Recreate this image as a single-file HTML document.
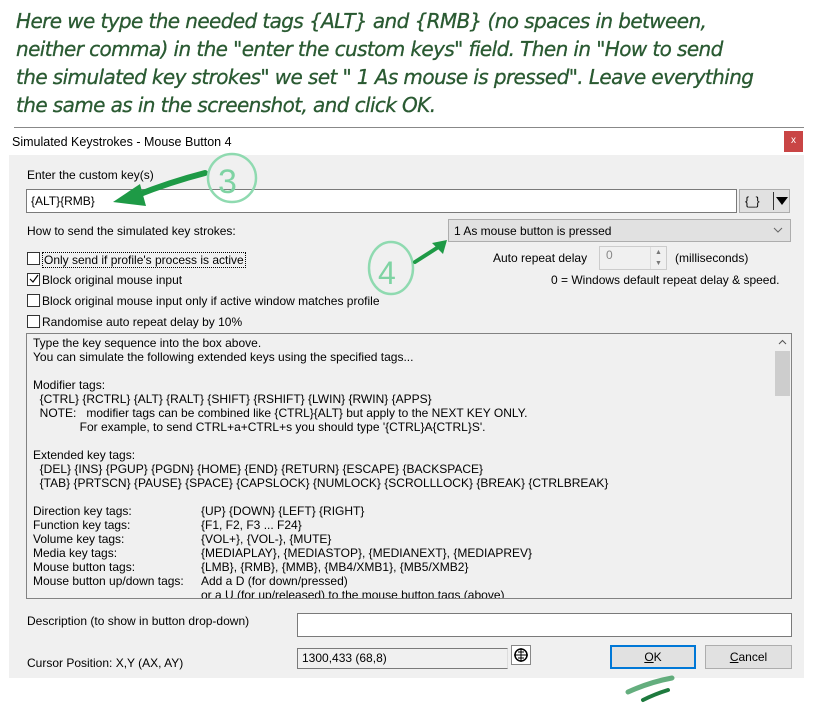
<!DOCTYPE html>
<html><head><meta charset="utf-8"><style>
*{margin:0;padding:0;box-sizing:border-box}
body{width:817px;height:711px;background:#fff;position:relative;overflow:hidden;font-family:"Liberation Sans",sans-serif;font-size:12px;color:#000}
.a{position:absolute;white-space:pre}
.hd{position:absolute;left:16px;font-size:20px;color:#2a5a32;font-family:"DejaVu Sans","Liberation Sans",sans-serif;font-style:italic;letter-spacing:-0.6px;white-space:pre;-webkit-text-stroke:0.3px #2a5a32}
.cb{position:absolute;width:13px;height:13px;border:1px solid #333;background:#fff}
.lbl{position:absolute;white-space:pre}
.ta div{height:14px;line-height:14px;white-space:pre}
</style></head><body>
<div class="hd" style="top:9px">Here we type the needed tags {ALT} and {RMB} (no spaces in between,</div>
<div class="hd" style="top:37px">neither comma) in the "enter the custom keys" field. Then in "How to send</div>
<div class="hd" style="top:65px">the simulated key strokes" we set " 1 As mouse is pressed". Leave everything</div>
<div class="hd" style="top:93px">the same as in the screenshot, and click OK.</div>
<div style="position:absolute;left:14px;top:127px;width:790px;height:1px;background:#888"></div>
<div style="position:absolute;left:9px;top:128px;width:795px;height:27px;background:#fff"></div>
<div class="a" style="left:12px;top:135px;font-size:12.5px">Simulated Keystrokes - Mouse Button 4</div>
<div style="position:absolute;left:784px;top:131px;width:19px;height:21px;background:#c94545;color:#fff;font-size:10px;text-align:center;line-height:20px">x</div>
<div style="position:absolute;left:9px;top:155px;width:795px;height:523px;background:#f0f0f0"></div>
<div class="a" style="left:27px;top:168px">Enter the custom key(s)</div>
<div style="position:absolute;left:26px;top:189px;width:711px;height:24px;background:#fff;border:1px solid #7a7a7a"></div>
<div class="a" style="left:31px;top:194px">{ALT}{RMB}</div>
<div style="position:absolute;left:739px;top:189px;width:51px;height:24px;background:#e1e1e1;border:1px solid #adadad"></div>
<div class="a" style="left:745px;top:194px">{_}</div>
<div style="position:absolute;left:773px;top:192px;width:1px;height:18px;background:#333"></div>
<div style="position:absolute;left:776px;top:197px;width:0;height:0;border-left:6px solid transparent;border-right:6px solid transparent;border-top:8px solid #000"></div>
<div class="a" style="left:27px;top:224px">How to send the simulated key strokes:</div>
<div style="position:absolute;left:448px;top:219px;width:343px;height:23px;background:#e1e1e1;border:1px solid #adadad"></div>
<div class="a" style="left:454px;top:224px">1 As mouse button is pressed</div>
<svg style="position:absolute;left:773px;top:227px" width="10" height="7"><path d="M1 1l4 4 4-4" stroke="#666" fill="none"/></svg>
<div class="cb" style="left:27px;top:252px"></div>
<div class="lbl" style="left:42px;top:252px;border:1px dotted #000;padding:0 1px">Only send if profile's process is active</div>
<div class="cb" style="left:27px;top:273px"></div>
<svg style="position:absolute;left:28px;top:274px" width="11" height="11"><path d="M2 5l3 3 5-7" stroke="#000" stroke-width="1.2" fill="none"/></svg>
<div class="lbl" style="left:42px;top:273px">Block original mouse input</div>
<div class="cb" style="left:27px;top:294px"></div>
<div class="lbl" style="left:42px;top:294px">Block original mouse input only if active window matches profile</div>
<div class="cb" style="left:27px;top:315px"></div>
<div class="lbl" style="left:42px;top:315px">Randomise auto repeat delay by 10%</div>
<div class="a" style="left:493px;top:251px">Auto repeat delay</div>
<div style="position:absolute;left:599px;top:246px;width:68px;height:24px;background:#f0f0f0;border:1px solid #ccc"></div>
<div class="a" style="left:606px;top:248px;color:#888">0</div>
<div style="position:absolute;left:650px;top:247px;width:16px;height:22px;border-left:1px solid #ddd;color:#777;font-size:7px;text-align:center;line-height:11px">▲<br>▼</div>
<div class="a" style="left:675px;top:251px">(milliseconds)</div>
<div class="a" style="left:551px;top:273px">0 = Windows default repeat delay &amp; speed.</div>
<div style="position:absolute;left:26px;top:333px;width:766px;height:266px;border:1px solid #828282;background:#f0f0f0;overflow:hidden">
<div class="ta" style="position:absolute;left:6px;top:2px">
<div>Type the key sequence into the box above.</div>
<div>You can simulate the following extended keys using the specified tags...</div>
<div> </div>
<div>Modifier tags:</div>
<div>  {CTRL} {RCTRL} {ALT} {RALT} {SHIFT} {RSHIFT} {LWIN} {RWIN} {APPS}</div>
<div>  NOTE:   modifier tags can be combined like {CTRL}{ALT} but apply to the NEXT KEY ONLY.</div>
<div>              For example, to send CTRL+a+CTRL+s you should type '{CTRL}A{CTRL}S'.</div>
<div> </div>
<div>Extended key tags:</div>
<div>  {DEL} {INS} {PGUP} {PGDN} {HOME} {END} {RETURN} {ESCAPE} {BACKSPACE}</div>
<div>  {TAB} {PRTSCN} {PAUSE} {SPACE} {CAPSLOCK} {NUMLOCK} {SCROLLLOCK} {BREAK} {CTRLBREAK}</div>
<div> </div>
<div>Direction key tags:<span style="position:absolute;left:168px">{UP} {DOWN} {LEFT} {RIGHT}</span></div>
<div>Function key tags:<span style="position:absolute;left:168px">{F1, F2, F3 ... F24}</span></div>
<div>Volume key tags:<span style="position:absolute;left:168px">{VOL+}, {VOL-}, {MUTE}</span></div>
<div>Media key tags:<span style="position:absolute;left:168px">{MEDIAPLAY}, {MEDIASTOP}, {MEDIANEXT}, {MEDIAPREV}</span></div>
<div>Mouse button tags:<span style="position:absolute;left:168px">{LMB}, {RMB}, {MMB}, {MB4/XMB1}, {MB5/XMB2}</span></div>
<div>Mouse button up/down tags:<span style="position:absolute;left:168px">Add a D (for down/pressed)</span></div>
<div><span style="position:absolute;left:168px">or a U (for up/released) to the mouse button tags (above)</span></div>
</div>
<div style="position:absolute;right:0;top:0;width:17px;height:264px;background:#f0f0f0"></div>
<svg style="position:absolute;right:4px;top:5px" width="9" height="6"><path d="M1 5l3.5-3.5L8 5" stroke="#555" fill="none"/></svg>
<div style="position:absolute;right:1px;top:17px;width:15px;height:45px;background:#cdcdcd"></div>
</div>
<div class="a" style="left:27px;top:614px">Description (to show in button drop-down)</div>
<div style="position:absolute;left:297px;top:613px;width:495px;height:24px;background:#fff;border:1px solid #7a7a7a"></div>
<div class="a" style="left:27px;top:656px">Cursor Position: X,Y (AX, AY)</div>
<div style="position:absolute;left:297px;top:648px;width:211px;height:21px;background:#f0f0f0;border:1px solid #7a7a7a;border-right-color:#ddd"></div>
<div class="a" style="left:302px;top:651px">1300,433 (68,8)</div>
<div style="position:absolute;left:511px;top:645px;width:20px;height:20px;border:1px solid #888;background:#fff"></div>
<svg style="position:absolute;left:513px;top:647px" width="16" height="16" viewBox="0 0 16 16"><circle cx="8" cy="8" r="6" fill="none" stroke="#000" stroke-width="1.5"/><path d="M8 1v14M1 8h14M5 5h6M5 11h6" stroke="#000"/></svg>
<div style="position:absolute;left:610px;top:645px;width:86px;height:24px;background:#e1e1e1;border:2px solid #0078d7;text-align:center;line-height:20px"><u>O</u>K</div>
<div style="position:absolute;left:705px;top:645px;width:87px;height:24px;background:#e1e1e1;border:1px solid #adadad;text-align:center;line-height:22px"><u>C</u>ancel</div>
<svg style="position:absolute;left:0;top:0" width="817" height="711">
<path d="M205 173 Q170 182 135 196" stroke="#1e9a46" stroke-width="6" fill="none" stroke-linecap="round"/>
<path d="M113 202 L140 184 L146 206 Z" fill="#1e9a46"/>
<circle cx="232" cy="178" r="24" fill="none" stroke="#8fdab0" stroke-width="2.5"/>
<text x="218" y="193" font-size="34" fill="#7fd3a3" font-family="Liberation Sans">3</text>
<ellipse cx="391" cy="268" rx="22" ry="26" fill="none" stroke="#8fdab0" stroke-width="2.5"/>
<text x="378" y="284" font-size="32" fill="#7fd3a3" font-family="Liberation Sans">4</text>
<path d="M415 262 L440 246" stroke="#1e9a46" stroke-width="4" stroke-linecap="round"/>
<path d="M447 240 L432 243 L443 254 Z" fill="#1e9a46"/>
<path d="M628 692 Q650 682 672 678" stroke="#3d9a5e" stroke-width="5" fill="none" stroke-linecap="round" opacity="0.8"/>
<path d="M643 700 Q655 694 668 690" stroke="#1e7a3e" stroke-width="4" fill="none" stroke-linecap="round"/>
</svg>
</body></html>
